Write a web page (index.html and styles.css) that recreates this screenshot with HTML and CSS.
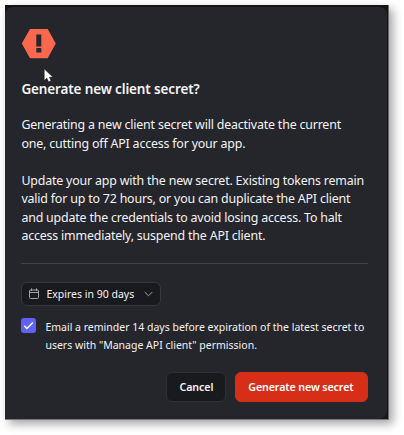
FILE: index.html
```html
<!DOCTYPE html>
<html lang="en">
<head>
<meta charset="utf-8">
<title>Generate new client secret</title>
<link rel="stylesheet" href="styles.css">
</head>
<body>
<div class="backdrop">
  <main class="modal" role="dialog" aria-labelledby="title">
    <svg class="alert" width="36" height="31" viewBox="0 0 36 31" aria-hidden="true">
      <path d="M9 .9h17.7L34.8 15.5 26.7 30.2H9L.8 15.5z" fill="#f9674f"/>
      <path d="M15.3 6.4h5v12h-5zM15.3 20h5v4.6h-5z" fill="#25262b"/>
    </svg>
    <h1 id="title">Generate new client secret?</h1>
    <p class="copy first">Generating a new client secret will deactivate the current<br>one, cutting off API access for your app.</p>
    <p class="copy">Update your app with the new secret. Existing tokens remain<br>valid for up to 72 hours, or you can duplicate the API client<br>and update the credentials to avoid losing access. To halt<br>access immediately, suspend the API client.</p>
    <hr>
    <button class="select" type="button">
      <svg width="11" height="12" viewBox="0 0 11 12" fill="none" stroke="#a2a3a8" aria-hidden="true"><path d="M1.5 2h7a1 1 0 0 1 1 1v6.5a1 1 0 0 1-1 1h-7a1 1 0 0 1-1-1V3a1 1 0 0 1 1-1zM.5 4.5h9M2.5 .4V3M7.5 .4V3"/></svg>
      <span>Expires in 90 days</span>
      <svg class="chevron" width="9" height="6" viewBox="0 0 9 6" fill="none" stroke="#a2a3a8" aria-hidden="true"><path d="M.7 1l3.8 3.8L8.3 1"/></svg>
    </button>
    <div class="reminder">
      <span class="checkbox" role="checkbox" aria-checked="true" aria-labelledby="reminder">
        <svg width="15" height="15" viewBox="0 0 15 15" fill="none" stroke="#fff" stroke-width="1.5" aria-hidden="true"><path d="M3.2 7.8l2.7 2.7 6-6"/></svg>
      </span>
      <span id="reminder">Email a reminder 14 days before expiration of the latest secret to<br>users with "Manage API client" permission.</span>
    </div>
    <div class="actions">
      <button class="btn cancel" type="button">Cancel</button>
      <button class="btn danger" type="button">Generate new secret</button>
    </div>
  </main>
  <svg class="pointer" width="12" height="15" viewBox="0 0 12 15" aria-hidden="true"><path d="M1.3 1v11.2l2.6-2.1 1.7 3.7 2.3-1-1.6-3.5 3.4-.2z" fill="#fff" stroke="#17181b" stroke-width=".4"/></svg>
</div>
</body>
</html>
```
FILE: styles.css
```css
* { box-sizing: border-box; }
body {
  margin: 0;
  padding: 5px;
  height: 435px;
  overflow: hidden;
  background: #fff;
  font-family: "Noto Sans", "Liberation Sans", sans-serif;
  color: #f3f3f5;
}
.backdrop {
  position: relative;
  width: 384px;
  height: 415px;
  padding: 2px 2px 1px 0;
  background: #14151a;
  border-right: 1px solid #696a6d;
  border-bottom: 1px solid #77787b;
  box-shadow: 4px 4px 9px rgba(0, 0, 0, .36);
}
.modal {
  display: flex;
  flex-direction: column;
  align-items: flex-start;
  width: 382px;
  height: 412px;
  padding: 21px 18.6px 0 16.4px;
  background: #25262b;
  border-radius: 8px 8px 8px 0;
}
.alert { display: block; flex: none; }
h1 {
  margin: 21px 0 0;
  font-size: 13.5px;
  line-height: 19px;
  font-weight: 600;
  letter-spacing: -.14px;
  white-space: nowrap;
}
.copy {
  margin: 0 0 18.5px;
  font-size: 12.4px;
  line-height: 18.5px;
  letter-spacing: -.18px;
  white-space: nowrap;
}
.copy.first { margin-top: 17px; }
hr {
  width: 347px;
  height: 1px;
  margin: -1px 0 0;
  border: 0;
  background: #424348;
}
button { font-family: inherit; color: inherit; }
.select {
  display: flex;
  align-items: center;
  width: 140px;
  height: 24px;
  margin-top: 18px;
  padding: 0 7px;
  border: 1px solid #36373c;
  border-radius: 6px;
  background: #191a1e;
  font-size: 10.5px;
  white-space: nowrap;
}
.select span { margin-left: 6px; }
.select svg { flex: none; }
.chevron { margin-left: auto; }
.reminder {
  display: flex;
  gap: 9px;
  margin-top: 12px;
  font-size: 10.5px;
  line-height: 18px;
  white-space: nowrap;
}
.checkbox {
  flex: none;
  width: 15px;
  height: 15px;
  border-radius: 3px;
  background: #6061f5;
}
.checkbox svg { display: block; }
.actions {
  display: flex;
  align-self: flex-end;
  gap: 9px;
  margin-top: 18px;
}
.btn {
  height: 30px;
  padding: 0;
  border-radius: 6px;
  font-size: 10.7px;
  font-weight: 600;
  letter-spacing: -.12px;
  white-space: nowrap;
}
.cancel { width: 60px; border: 1px solid #303136; background: #191a1e; }
.danger { width: 133px; padding-right: 2px; border: 1px solid #d72e18; background: #d72e18; color: #fff; }
.pointer { position: absolute; left: 38px; top: 63px; }
```
